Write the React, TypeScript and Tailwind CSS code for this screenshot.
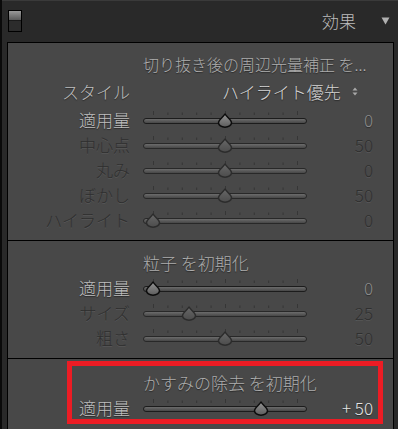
import React from 'react'

const FONT = "font-['Noto_Sans_CJK_JP','Noto_Sans',sans-serif] font-light"

// light text with a dark drop, dim text embossed into the panel
const BRIGHT = 'text-[#bdbdbd] [text-shadow:0_1px_1px_rgba(0,0,0,0.45)]'
const DIM = 'text-[#2f2f2f] [text-shadow:0_1px_0_rgba(255,255,255,0.09)]'

function Thumb({ active }: { active: boolean }) {
  return (
    <svg width="16" height="15" viewBox="0 0 16 15" className="block">
      <defs>
        <linearGradient id={active ? 'tA' : 'tD'} x1="0" y1="0" x2="0" y2="1">
          <stop offset="0" stopColor={active ? '#959595' : '#686868'} />
          <stop offset="1" stopColor={active ? '#5c5c5c' : '#4c4c4c'} />
        </linearGradient>
      </defs>
      <path
        d="M8 1 C9.6 4 14.5 6.5 14.5 9.8 A6.5 4.4 0 0 1 1.5 9.8 C1.5 6.5 6.4 4 8 1 Z"
        fill={`url(#${active ? 'tA' : 'tD'})`}
        stroke={active ? '#0c0c0c' : '#2c2c2c'}
        strokeWidth="1.5"
        strokeLinejoin="round"
      />
    </svg>
  )
}

function Slider({ frac, active }: { frac: number; active: boolean }) {
  const ticks = [0, 1, 2, 3, 4, 5, 6, 7, 8, 9, 10]
  return (
    <div className="relative w-[164px] h-[25px] shrink-0">
      <svg width="164" height="8" className="absolute left-0 top-[1px]">
        {ticks.map(i => {
          const x = 10.5 + i * 14.4
          const long = i === 0 || i === 5 || i === 10
          return (
            <line
              key={i}
              x1={x}
              x2={x}
              y1={long ? 2 : 3.5}
              y2={6}
              stroke="#363636"
              strokeWidth="1"
            />
          )
        })}
      </svg>
      <div
        className={`absolute left-0 right-0 top-[10px] h-[6px] rounded-[3px] border ${
          active ? 'border-[#1c1c1c]' : 'border-[#282828]'
        } bg-gradient-to-b from-[#6c6c6c] to-[#474747]`}
      />
      <div className="absolute top-[5px]" style={{ left: 10 + frac * 144 - 8 }}>
        <Thumb active={active} />
      </div>
    </div>
  )
}

function Row({
  label,
  value,
  frac,
  active,
  valueClass,
}: {
  label: string
  value: string
  frac: number
  active: boolean
  valueClass?: string
}) {
  return (
    <div className="flex items-center h-[25px]">
      <div className={`w-[122px] text-right text-[17px] leading-none ${active ? BRIGHT : DIM}`}>{label}</div>
      <div className="ml-[13px] pt-[1px]">
        <Slider frac={frac} active={active} />
      </div>
      <div
        className={`flex-1 text-right pr-[20px] text-[17px] leading-none ${
          valueClass ?? (active ? 'text-[#8c8c8c] [text-shadow:0_1px_1px_rgba(0,0,0,0.4)]' : DIM)
        }`}
      >
        {value}
      </div>
    </div>
  )
}

function Title({ children, size = 'text-[17px]' }: { children: React.ReactNode; size?: string }) {
  return (
    <div className={`h-[25px] flex items-center pl-[135px] ${size} leading-none text-[#adadad] [text-shadow:0_1px_1px_rgba(0,0,0,0.45)] whitespace-nowrap`}>
      {children}
    </div>
  )
}

export default function App() {
  return (
    <div className={`w-[398px] h-[429px] overflow-hidden bg-[#292929] border-l-2 border-[#0a0a0a] ${FONT}`}>
      {/* Header */}
      <div className="h-[42px] border-t border-[#3a3a3a] flex items-start">
        <div className="ml-[6px] mt-[9px] w-[14px] h-[22px] border border-black flex flex-col">
          <div className="h-[9px] bg-gradient-to-b from-[#9a9a9a] to-[#5a5a5a]" />
          <div className="flex-1 bg-[#2c2c2c] border-t border-[#1a1a1a]" />
        </div>
        <div className="flex-1" />
        <div className="mt-[11px] text-[17px] leading-none text-[#bcbcbc]">効果</div>
        <svg width="9" height="8" viewBox="0 0 9 8" className="ml-[25px] mr-[8px] mt-[16px]">
          <path d="M0.5 0.5 H8.5 L4.5 7.5 Z" fill="#b0b0b0" />
        </svg>
      </div>

      {/* Panel */}
      <div className="ml-[5px] mr-[4px] border-x border-t border-black bg-[#484848]">
        {/* 切り抜き後の周辺光量補正 */}
        <div className="pt-[8px] pb-[8px]">
          <Title size="text-[16px]">切り抜き後の周辺光量補正 を...</Title>
          <div className="h-[31px] flex items-center">
            <div className={`w-[122px] text-right text-[17px] leading-none ${BRIGHT}`}>スタイル</div>
            <div className="ml-[92px] flex items-center text-[17px] leading-none text-[#d4d4d4] [text-shadow:0_1px_1px_rgba(0,0,0,0.45)]">
              ハイライト優先
              <svg width="6" height="9" viewBox="0 0 6 9" className="ml-[11px]">
                <path d="M3 0.5 L5.5 3.5 H0.5 Z M3 8.5 L5.5 5.5 H0.5 Z" fill="#a8a8a8" />
              </svg>
            </div>
          </div>
          <Row label="適用量" value="0" frac={0.5} active />
          <Row label="中心点" value="50" frac={0.5} active={false} />
          <Row label="丸み" value="0" frac={0.5} active={false} />
          <Row label="ぼかし" value="50" frac={0.5} active={false} />
          <Row label="ハイライト" value="0" frac={0} active={false} />
        </div>

        {/* 粒子 */}
        <div className="border-t border-black pt-[9px] pb-[8px]">
          <Title>粒子 を初期化</Title>
          <Row label="適用量" value="0" frac={0} active />
          <Row label="サイズ" value="25" frac={0.25} active={false} />
          <Row label="粗さ" value="50" frac={0.5} active={false} />
        </div>

        {/* かすみの除去 */}
        <div className="relative border-t border-black pt-[11px] pb-[20px]">
          <Title>かすみの除去 を初期化</Title>
          <Row
            label="適用量"
            value="+ 50"
            frac={0.75}
            active
            valueClass="text-[#e4e4e4] [text-shadow:0_1px_1px_rgba(0,0,0,0.45)]"
          />
          <div className="absolute top-[2px] left-[59px] w-[316px] h-[63px] border-[5px] border-[#ec1c24] pointer-events-none" />
        </div>
      </div>
    </div>
  )
}
